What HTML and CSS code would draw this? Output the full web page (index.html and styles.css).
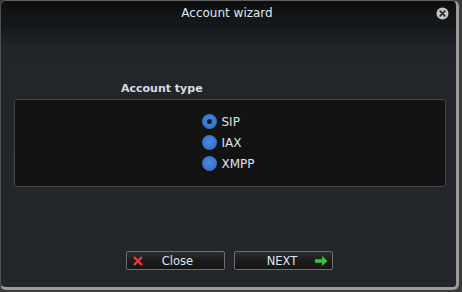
FILE: index.html
```html
<!DOCTYPE html>
<html>
<head>
<meta charset="utf-8">
<link rel="stylesheet" href="styles.css">
</head>
<body>
<div class="window">
  <div class="titlebar">
    <span class="title">Account wizard</span>
    <span class="closebtn">
      <svg width="13" height="13" viewBox="0 0 13 13">
        <circle cx="6.5" cy="6.5" r="6" fill="#c4c4c4"/>
        <path d="M4.2 4.2 L8.8 8.8 M8.8 4.2 L4.2 8.8" stroke="#2a2a2a" stroke-width="1.7" stroke-linecap="round"/>
      </svg>
    </span>
  </div>
  <div class="content">
    <div class="grouplabel">Account type</div>
    <div class="group">
      <div class="radios">
        <label class="radio"><span class="dot checked"></span><span>SIP</span></label>
        <label class="radio"><span class="dot"></span><span>IAX</span></label>
        <label class="radio"><span class="dot"></span><span>XMPP</span></label>
      </div>
    </div>
    <div class="buttons">
      <div class="btn">
        <svg class="ico" width="12" height="12" viewBox="0 0 12 12">
          <path d="M2 2 L10 10 M10 2 L2 10" stroke="#e8383a" stroke-width="2.4"/>
        </svg>
        <span class="lbl close">Close</span>
      </div>
      <div class="btn">
        <span class="lbl next">NEXT</span>
        <svg class="ico right" width="13" height="10" viewBox="0 0 13 10">
          <path d="M0 3.2 H7 V0 L12.5 5 L7 10 V6.8 H0 Z" fill="#3cc23c"/>
        </svg>
      </div>
    </div>
  </div>
</div>
</body>
</html>
```
FILE: styles.css
```css
html, body {
  margin: 0;
  padding: 0;
  background: #3a3a3a;
  width: 462px;
  height: 292px;
  overflow: hidden;
}
.window {
  width: 455px;
  height: 286px;
  border-right: 3px solid #9a9a9a;
  border-bottom: 3px solid #9a9a9a;
  border-top: 1px solid #606060;
  border-left: 1px solid #505050;
  border-radius: 6px;
  background: linear-gradient(#0d0e10 0px, #15171a 22px, #22252a 48px, #23262b 100%);
  display: flex;
  flex-direction: column;
  font-family: "DejaVu Sans", sans-serif;
  overflow: hidden;
}
.titlebar {
  height: 24px;
  display: flex;
  align-items: center;
  justify-content: center;
  position: relative;
}
.title {
  color: #dfe7ef;
  font-size: 12px;
  margin-top: -1px;
  margin-left: -3px;
}
.closebtn {
  position: absolute;
  right: 7px;
  top: 6px;
  width: 13px;
  height: 13px;
}
.closebtn svg { display: block; }
.content {
  display: flex;
  flex-direction: column;
  flex: 1;
}
.grouplabel {
  margin-top: 57px;
  margin-left: 120px;
  font-size: 11px;
  font-weight: bold;
  color: #d8dce0;
  height: 17px;
  line-height: 13px;
}
.group {
  margin-left: 13px;
  width: 430px;
  height: 86px;
  border: 1px solid #45474a;
  border-radius: 3px;
  background: #131313;
  display: flex;
  justify-content: center;
}
.radios {
  display: flex;
  flex-direction: column;
  gap: 6px;
  margin-top: 14px;
  margin-left: -3px;
}
.radio {
  display: flex;
  align-items: center;
  gap: 4px;
  height: 15px;
  font-size: 12px;
  color: #dde3ea;
}
.dot {
  width: 15px;
  height: 15px;
  border-radius: 50%;
  background: radial-gradient(circle at 50% 45%, #4a8ae0 0%, #3b78cc 55%, #2a5a9e 100%);
  position: relative;
  box-sizing: border-box;
}
.dot.checked::after {
  content: "";
  position: absolute;
  left: 5px;
  top: 5px;
  width: 5px;
  height: 5px;
  border-radius: 50%;
  background: #0e1a2a;
}
.buttons {
  margin-top: 64px;
  display: flex;
  gap: 9px;
  margin-left: 125px;
}
.btn {
  width: 97px;
  height: 17px;
  border: 1px solid #6e6e6e;
  border-radius: 2px;
  background: linear-gradient(#2e2e2e, #1c1c1c 50%, #151515);
  display: flex;
  align-items: center;
  justify-content: center;
  position: relative;
  font-size: 11.5px;
  color: #dfe7ef;
}
.lbl.close { margin-left: 4px; }
.lbl.next { margin-left: -3px; }
.ico {
  position: absolute;
  left: 5px;
  top: 3px;
}
.ico.right {
  left: auto;
  right: 4px;
  top: 4px;
}
```
